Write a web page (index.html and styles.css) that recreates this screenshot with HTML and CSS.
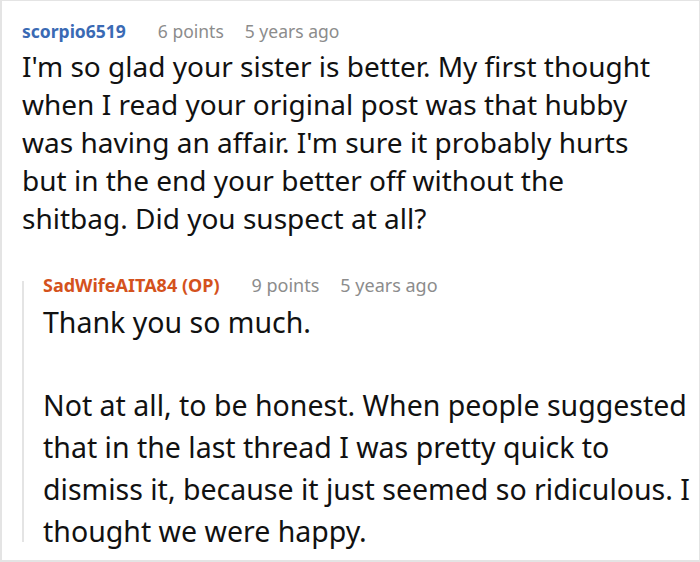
FILE: index.html
```html
<!DOCTYPE html>
<html>
<head>
<meta charset="utf-8">
<link rel="stylesheet" href="styles.css">
</head>
<body>
<div class="frame">
  <div class="comment">
    <div class="meta">
      <span class="user">scorpio6519</span>
      <span class="info">6 points</span>
      <span class="info">5 years ago</span>
    </div>
    <div class="text first">I'm so glad your sister is better. My first thought when I read your original post was that hubby was having an affair. I'm sure it probably hurts but in the end your better off without the shitbag. Did you suspect at all?</div>
    <div class="reply">
      <div class="meta op-meta">
        <span class="user op">SadWifeAITA84 (OP)</span>
        <span class="info">9 points</span>
        <span class="info">5 years ago</span>
      </div>
      <div class="text second">
        <p>Thank you so much.</p>
        <p>Not at all, to be honest. When people suggested that in the last thread I was pretty quick to dismiss it, because it just seemed so ridiculous. I thought we were happy.</p>
      </div>
    </div>
  </div>
</div>
</body>
</html>
```
FILE: styles.css
```css
html, body {
  margin: 0;
  padding: 0;
  background: #fff;
}
.frame {
  box-sizing: border-box;
  width: 700px;
  height: 562px;
  overflow: hidden;
  border: 1px solid #e4e4e4;
  border-left-width: 2px;
  border-bottom-width: 2px;
  font-family: "Noto Sans", sans-serif;
  color: #111;
}
.comment {
  padding: 18px 0 0 20px;
}
.meta {
  display: flex;
  gap: 21px;
  font-size: 17.5px;
  line-height: 24px;
}
.op-meta {
  font-size: 18px;
}
.user {
  font-weight: bold;
  color: #3a6ab4;
  margin-right: 11px;
}
.user.op {
  color: #d4521d;
}
.info {
  color: #8c8c8c;
}
.text {
  font-size: 28px;
  line-height: 38px;
}
.first {
  margin-top: 4px;
  width: 634px;
}
.reply {
  position: relative;
  margin-top: 36px;
  padding-left: 21px;
}
.reply::before {
  content: "";
  position: absolute;
  left: 0;
  top: 8px;
  bottom: 10px;
  width: 2px;
  background: #e4e4e4;
}
.second {
  margin-top: 5px;
  margin-right: -12px;
  font-size: 28.5px;
  line-height: 41.7px;
}
.second p {
  margin: 0 0 41.7px 0;
}
.second p:last-child {
  margin-bottom: 0;
}
```
